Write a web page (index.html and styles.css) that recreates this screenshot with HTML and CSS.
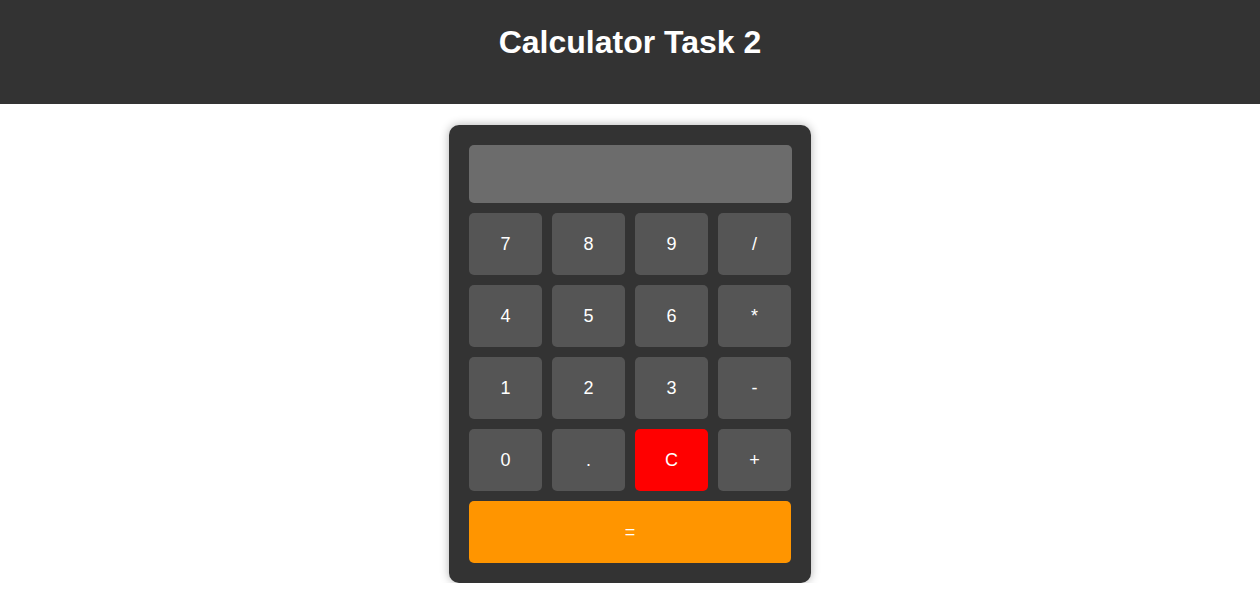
FILE: index.html
```html
<!DOCTYPE html>
<html>
<head>
<meta charset="utf-8">
<title>Calculator Task 2</title>
<link rel="stylesheet" href="styles.css">
</head>
<body>
<header class="header">
  <h1 class="title">Calculator Task 2</h1>
</header>
<main class="main">
  <div class="calc">
    <div class="display"></div>
    <div class="keys">
      <button class="key">7</button>
      <button class="key">8</button>
      <button class="key">9</button>
      <button class="key">/</button>
      <button class="key">4</button>
      <button class="key">5</button>
      <button class="key">6</button>
      <button class="key">*</button>
      <button class="key">1</button>
      <button class="key">2</button>
      <button class="key">3</button>
      <button class="key">-</button>
      <button class="key">0</button>
      <button class="key">.</button>
      <button class="key key-clear">C</button>
      <button class="key">+</button>
      <button class="key key-equals">=</button>
    </div>
  </div>
</main>
</body>
</html>
```

FILE: styles.css
```css
* { box-sizing: border-box; }
body {
  margin: 0;
  font-family: "Liberation Sans", Arial, sans-serif;
  background: #fff;
}
.header {
  background: #333;
  height: 104px;
  padding-top: 24px;
  text-align: center;
}
.title {
  margin: 0;
  color: #fff;
  font-size: 32px;
  line-height: 37px;
  font-weight: bold;
}
.main {
  display: flex;
  justify-content: center;
  padding-top: 21px;
}
.calc {
  width: 362px;
  background: #333;
  border-radius: 10px;
  padding: 20px;
  box-shadow: 0 0 10px rgba(0, 0, 0, 0.3);
}
.display {
  width: 323px;
  height: 58px;
  background: #6c6c6c;
  border-radius: 5px;
  margin-bottom: 10px;
}
.keys {
  display: grid;
  grid-template-columns: repeat(4, 73px);
  grid-auto-rows: 62px;
  gap: 10px;
}
.key {
  border: none;
  border-radius: 5px;
  background: #555;
  color: #fff;
  font-family: "Liberation Sans", Arial, sans-serif;
  font-size: 18px;
  padding: 0;
}
.key-clear { background: #ff0000; }
.key-equals {
  grid-column: 1 / -1;
  background: #ff9500;
}
```
